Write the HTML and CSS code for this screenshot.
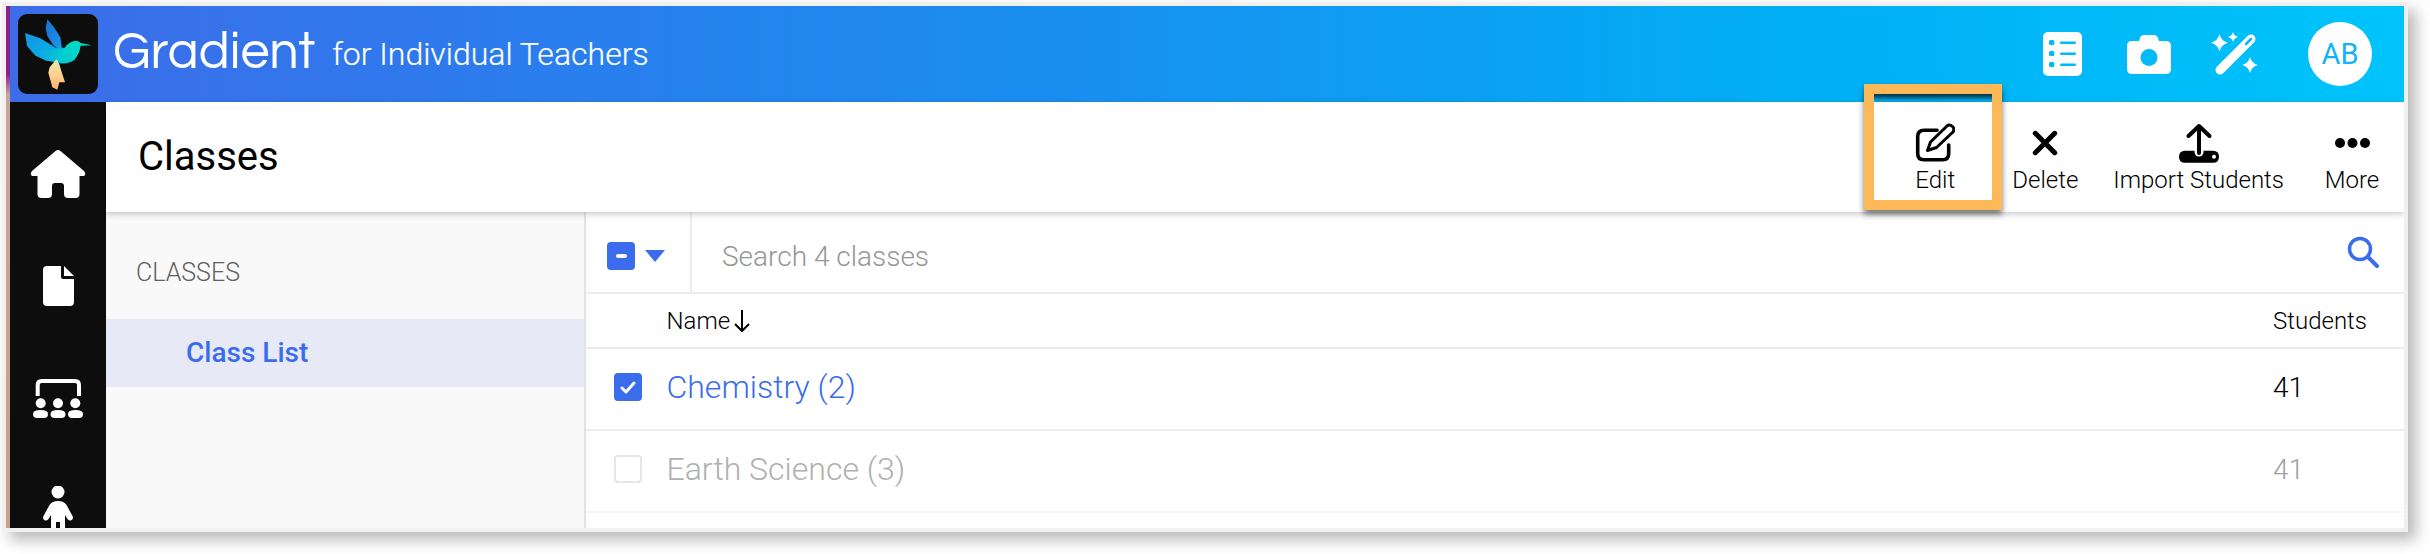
FILE: index.html
```html
<!DOCTYPE html>
<html lang="en">
<head>
<meta charset="utf-8">
<title>Classes</title>
<link rel="stylesheet" href="styles.css">
</head>
<body>
<div class="frame">
  <div class="app">
    <div class="strip"></div>
    <div class="shell">
      <header class="topbar">
        <div class="logo">
          <svg viewBox="9 6 240 240" width="80" height="80">
            <defs>
              <linearGradient id="wingBack" x1="0" y1="0" x2="1" y2="1"><stop offset="0" stop-color="#1a6fd6"/><stop offset="1" stop-color="#1a9ae8"/></linearGradient>
              <linearGradient id="wingA" x1="0" y1="0" x2="1" y2="1"><stop offset="0" stop-color="#1791e6"/><stop offset="1" stop-color="#00bfe0"/></linearGradient>
              <linearGradient id="wingB" x1="0" y1="0" x2="1" y2="0"><stop offset="0" stop-color="#0fa0e6"/><stop offset="1" stop-color="#00d0d0"/></linearGradient>
              <linearGradient id="bodyFill" x1="0" y1="1" x2="1" y2="0"><stop offset="0" stop-color="#00c8d4"/><stop offset="1" stop-color="#00e2c0"/></linearGradient>
              <linearGradient id="tailFill" x1="0" y1="0" x2="0" y2="1"><stop offset="0" stop-color="#d8f0b0"/><stop offset=".45" stop-color="#fdd48f"/><stop offset="1" stop-color="#fbb274"/></linearGradient>
            </defs>
            <polygon fill="url(#wingBack)" points="97,22 116,44 136,76 142,116 115,100 97,72 92,48"/>
            <polygon fill="url(#wingA)" points="30,63 76,79 120,106 150,108 140,152 95,146 60,130 36,102"/>
            <polygon fill="url(#wingB)" points="56,112 100,116 152,108 140,152 95,146 60,130"/>
            <polygon fill="url(#tailFill)" points="124,142 104,166 100,182 112,226 127,233 133,211 150,211 140,180 131,150"/>
            <path fill="url(#bodyFill)" d="M128 153 Q142 130 150 106 Q164 86 184 86 Q192 87 197 93 L231 100 L197 101 Q194 124 178 144 Q160 158 128 153Z"/>
          </svg>
        </div>
        <span class="brand">Gradient</span>
        <span class="tagline">for Individual Teachers</span>
        <div class="top-actions">
          <svg class="ic-list" viewBox="0 0 39 44" width="39" height="44">
            <rect width="39" height="44" rx="5" fill="#fff"/>
            <g fill="#00b9f7"><rect x="6" y="8" width="5.300" height="5" rx="1.500"/><rect x="6" y="19" width="5.300" height="5" rx="1.500"/><rect x="6" y="30" width="5.300" height="5" rx="1.500"/><rect x="17" y="9.500" width="16" height="2.500" rx="1.250"/><rect x="17" y="20.500" width="16" height="2.500" rx="1.250"/><rect x="17" y="31.500" width="16" height="2.500" rx="1.250"/></g>
          </svg>
          <svg class="ic-cam" viewBox="0 0 44 39" width="44" height="39">
            <path fill="#fff" d="M5 6h7l1-3q1-3 4-3h10q3 0 4 3l1 3h7q5 0 5 5v23q0 5-5 5H5q-5 0-5-5V11q0-5 5-5Z"/>
            <circle cx="22" cy="22.500" r="8.500" fill="#00bbf8"/>
          </svg>
          <svg class="ic-wand" viewBox="0 0 47 44" width="47" height="44">
            <g fill="#fff">
              <path d="M8.500 2.200Q10.200 9 17 10.700Q10.200 12.400 8.500 19.200Q6.800 12.400 0 10.700Q6.800 9 8.500 2.200Z"/>
              <path d="M22 0Q23 4 27 5Q23 6 22 10Q21 6 17 5Q21 4 22 0Z"/>
              <path d="M39 25Q40.600 31.400 47 33Q40.600 34.600 39 41Q37.400 34.600 31 33Q37.400 31.400 39 25Z"/>
            </g>
            <path fill="none" stroke="#fff" stroke-width="9" stroke-linecap="round" d="M40 7L9 38"/>
            <path fill="none" stroke="#00bbf8" stroke-width="2.500" stroke-linecap="round" d="M35 12L40 7"/>
          </svg>
          <div class="avatar">AB</div>
        </div>
      </header>
      <div class="body">
        <nav class="rail">
          <div class="rail-item">
            <svg viewBox="0 0 56 48" width="56" height="48"><path fill="#fff" d="M25.500 1Q28 -1 30.500 1L54 21Q56.500 24 54 26H49.500V44Q49.500 48 45.500 48H38Q34 48 34 44V36Q34 33 31 33H25Q22 33 22 36V44Q22 48 18 48H11.500Q7.500 48 7.500 44V26H2Q-.5 24 2 21Z"/></svg>
          </div>
          <div class="rail-item">
            <svg viewBox="0 0 31 40" width="31" height="40"><path fill="#fff" d="M4 0H18V11Q18 13 20 13H31V36Q31 40 27 40H4Q0 40 0 36V4Q0 0 4 0Z"/><path fill="#fff" d="M21 0L31 10H21Z"/></svg>
          </div>
          <div class="rail-item">
            <svg viewBox="0 0 50 40" width="50" height="40"><path fill="none" stroke="#fff" stroke-width="4" stroke-linecap="butt" d="M4.700 18V7Q4.700 3 8.700 3H42Q46 3 46 7V18"/><g fill="#fff"><circle cx="7.700" cy="25.300" r="5"/><circle cx="25" cy="25.300" r="5"/><circle cx="42.300" cy="25.300" r="5"/><path d="M0 36Q0 32 7.500 32Q15 32 15 36Q15 40 11 40H4Q0 40 0 36Z"/><path d="M17.500 36Q17.500 32 25 32Q32.500 32 32.500 36Q32.500 40 28.500 40H21.500Q17.500 40 17.500 36Z"/><path d="M35 36Q35 32 42.500 32Q50 32 50 36Q50 40 46 40H39Q35 40 35 36Z"/></g></svg>
          </div>
          <div class="rail-item">
            <svg viewBox="0 0 30 60" width="30" height="60"><g fill="#fff"><circle cx="15" cy="6" r="6.500"/><path d="M15 15Q21 15 23.500 19L29.500 30Q31 33 28 34.500Q26 35 24.500 33L22 29V60H17V36H13V60H8V29L5.500 33Q4 35 2 34.500Q-1 33 .5 30L6.500 19Q9 15 15 15Z"/></g></svg>
          </div>
        </nav>
        <div class="content">
          <div class="toolbar">
            <h1 class="title">Classes</h1>
            <div class="tools">
              <div class="tool tool-edit">
                <svg viewBox="0 0 40 40" width="40" height="40"><path fill="none" stroke="#000" stroke-width="3.600" stroke-linecap="round" d="M22 7.300H9Q2.700 7.300 2.700 13.600V30.400Q2.700 36.700 9 36.700H27.400Q33.700 36.700 33.700 30.400V22"/><path fill="none" stroke="#000" stroke-width="3" stroke-linejoin="round" d="M12.500 27.500L15.500 19L32 3Q34.500 .8 37.500 3.500Q40 6 38 9L21.500 24.500Z"/></svg>
                <span>Edit</span>
                <div class="highlight"></div>
              </div>
              <div class="tool tool-delete">
                <svg viewBox="0 0 40 40" width="40" height="40"><path fill="none" stroke="#000" stroke-width="5" stroke-linecap="round" d="M10.300 10.300L29.700 29.700M29.700 10.300L10.300 29.700"/></svg>
                <span>Delete</span>
              </div>
              <div class="tool">
                <svg viewBox="0 0 40 40" width="40" height="40"><path fill="#000" d="M6 27.700H34Q40 27.700 40 33.700Q40 39.700 34 39.700H6Q0 39.700 0 33.700Q0 27.700 6 27.700Z"/><path fill="none" stroke="#fff" stroke-width="9" stroke-linecap="round" d="M20 22V29"/><circle cx="35" cy="33.700" r="2" fill="#fff"/><path fill="none" stroke="#000" stroke-width="4" stroke-linecap="round" stroke-linejoin="round" d="M20 30V3M9.500 13L20 3L30.500 13"/></svg>
                <span>Import Students</span>
              </div>
              <div class="tool">
                <svg viewBox="0 0 40 40" width="40" height="40"><g fill="#000"><circle cx="8" cy="20" r="5"/><circle cx="20.500" cy="20" r="5"/><circle cx="33" cy="20" r="5"/></g></svg>
                <span>More</span>
              </div>
            </div>
          </div>
          <div class="columns">
            <aside class="panel">
              <div class="panel-label">CLASSES</div>
              <div class="panel-item">Class List</div>
            </aside>
            <main class="list">
              <div class="search-row">
                <div class="bulk">
                  <span class="check check-mixed"><i></i></span>
                  <span class="caret"></span>
                </div>
                <div class="search-text">Search 4 classes</div>
                <svg class="search-icon" viewBox="0 0 32 32" width="32" height="32"><circle cx="13" cy="13" r="10.500" fill="none" stroke="#3b6cec" stroke-width="3.500"/><path d="M21 21L30 30" stroke="#3b6cec" stroke-width="4" stroke-linecap="round"/></svg>
              </div>
              <div class="row row-head">
                <span></span>
                <span class="col-name">Name<svg viewBox="0 0 18 24" width="18" height="24"><path fill="none" stroke="#000" stroke-width="2" d="M9 1V22M2 15L9 22L16 15"/></svg></span>
                <span>Students</span>
              </div>
              <div class="row row-data">
                <span class="check check-on"><svg viewBox="0 0 28 28" width="28" height="28"><path fill="none" stroke="#fff" stroke-width="3" stroke-linecap="round" stroke-linejoin="round" d="M8 15L12 19L20 10"/></svg></span>
                <span class="link">Chemistry (2)</span>
                <span class="count">41</span>
              </div>
              <div class="row row-data row-muted">
                <span class="check check-off"></span>
                <span class="faded">Earth Science (3)</span>
                <span class="count">41</span>
              </div>
            </main>
          </div>
        </div>
      </div>
    </div>
  </div>
</div>
</body>
</html>
```

FILE: styles.css
```css
* { box-sizing: border-box; }
html, body { margin: 0; background: #fff; height: 100%; overflow: hidden; }
body { padding: 2px 0 0 2px; font-family: Roboto, "Liberation Sans", sans-serif; }

.frame {
  width: 2406px;
  height: 530px;
  padding: 4px;
  background: #f0f0f0;
  box-shadow: 8px 8px 14px rgba(0, 0, 0, .28);
}
.app { display: flex; height: 522px; overflow: hidden; background: #fff; }
.strip { width: 4px; flex: none; background: linear-gradient(180deg, #8e1f8e 0, #8e1f8e 13%, #c8a598 17%, #c8a088 100%); }
.shell { flex: 1; display: flex; flex-direction: column; min-width: 0; }

.topbar {
  height: 96px;
  flex: none;
  display: flex;
  align-items: center;
  padding-left: 8px;
  color: #fff;
  background: linear-gradient(90deg, #3d6ce9 0, #1c8bf0 40%, #01aff5 75%, #00c4fb 100%);
}
.logo { width: 80px; height: 80px; flex: none; background: #0d0d0d; border-radius: 9px; display: flex; }
.brand { margin-left: 15px; font-family: "Questrial", Lato, sans-serif; font-weight: 300; font-size: 52px; line-height: 1; padding-bottom: 4px; }
.tagline { margin-left: 17px; font-size: 32px; font-weight: 300; -webkit-text-stroke: .2px #fff; }
.top-actions { margin-left: auto; display: flex; align-items: center; padding-right: 32px; }
.ic-cam { margin-left: 45px; }
.ic-wand { margin-left: 40px; }
.avatar {
  margin-left: 50px;
  width: 64px;
  height: 64px;
  border-radius: 50%;
  background: #fff;
  color: #12b4f6;
  display: flex;
  align-items: center;
  justify-content: center;
  font-size: 29px;
}

.body { flex: 1; display: flex; min-height: 0; }
.rail { width: 96px; flex: none; background: #0d0d0d; padding-top: 16px; }
.rail-item { height: 112px; display: flex; align-items: center; justify-content: center; }
.rail-item:last-child svg { align-self: flex-start; margin-top: 32px; }
.content { flex: 1; display: flex; flex-direction: column; min-width: 0; }

.toolbar {
  height: 110px;
  flex: none;
  display: flex;
  align-items: center;
  justify-content: space-between;
  padding: 0 2px 0 32px;
  background: #fff;
  box-shadow: 0 2px 6px rgba(0, 0, 0, .22);
  position: relative;
  z-index: 1;
}
.title { margin: 0; padding-bottom: 2px; font-size: 40px; font-weight: 400; color: #000; }
.tools { display: flex; padding-top: 3px; }
.tool {
  min-width: 100px;
  padding: 0 18px;
  display: flex;
  flex-direction: column;
  align-items: center;
  position: relative;
  font-size: 24px;
  font-weight: 300;
  color: #000;
}
.tool span { margin-top: 4px; line-height: 27px; white-space: nowrap; }
.tool-edit { min-width: 120px; }
.tool-delete { padding: 0 17px; }
.highlight {
  position: absolute;
  left: -11px;
  top: -39px;
  width: 138px;
  height: 126px;
  border: 10px solid #fdb858;
  box-shadow: 0 4px 6px rgba(0, 0, 0, .55), inset 0 8px 4px -4px rgba(0, 0, 0, .7);
}

.columns { flex: 1; display: flex; min-height: 0; }
.panel { width: 480px; flex: none; background: #f9f9f9; border-right: 2px solid #e3e3e3; }
.panel-label { height: 107px; padding: 46px 0 0 30px; font-size: 25px; font-weight: 300; color: #606060; }
.panel-item { height: 68px; padding: 0 0 2px 80px; display: flex; align-items: center; background: #e7eaf6; color: #3b6cec; font-size: 28px; font-weight: 500; }

.list { flex: 1; min-width: 0; background: #fff; }
.search-row { height: 82px; display: flex; align-items: center; border-bottom: 2px solid #ececec; }
.bulk { width: 106px; height: 100%; padding: 8px 0 0 21px; display: flex; align-items: center; gap: 10px; border-right: 2px solid #ececec; flex: none; }
.check { width: 28px; height: 28px; border-radius: 4px; display: flex; align-items: center; justify-content: center; flex: none; }
.check-mixed { background: #3b6cec; }
.check-mixed i { width: 11px; height: 4px; border-radius: 2px; background: #fff; }
.check-on { background: #3b6cec; }
.check-off { border: 2px solid #e6e6e6; }
.caret { width: 0; height: 0; border-left: 10px solid transparent; border-right: 10px solid transparent; border-top: 12px solid #3b6cec; }
.search-text { margin-left: 30px; padding-top: 8px; font-size: 28px; font-weight: 300; color: #969696; }
.search-icon { margin-left: auto; margin-right: 25px; }

.row { display: grid; grid-template-columns: 52.500px 1fr 131px; align-items: center; padding-left: 28px; border-bottom: 2px solid #ececec; }
.row-head { height: 55px; font-size: 24px; font-weight: 300; color: #000; }
.col-name { display: flex; align-items: center; gap: 3px; }
.row-data { height: 82px; padding-bottom: 4px; font-size: 32px; font-weight: 300; }
.row-muted { border-bottom-color: #f5f5f5; }
.link { color: #3b6cec; }
.faded { color: #b0b0b0; }
.count { color: #000; font-size: 28px; font-weight: 300; }
.row-muted .count { color: #a0a0a0; }
```
